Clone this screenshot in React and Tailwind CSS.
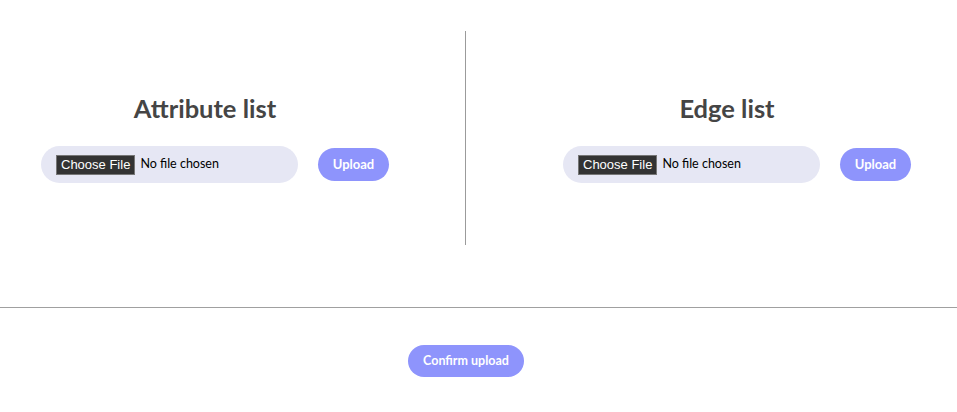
import React from 'react';

function FilePicker() {
  return (
    <div className="flex items-center w-[257px] h-[37px] rounded-full bg-[#e6e7f4] pl-[15px]">
      <span className="h-[20px] px-[4px] flex items-center bg-[#333333] border border-[#767676] text-white text-[13px] font-['Liberation_Sans',Arial,sans-serif]">
        Choose File
      </span>
      <span className="ml-[5px] text-[12.5px] text-black font-['Lato',sans-serif]">No file chosen</span>
    </div>
  );
}

function Column({ title }) {
  return (
    <div className="w-[410px] flex flex-col items-center pt-[61px]">
      <h2 className="h-[32px] leading-[32px] text-[25.5px] font-bold text-[#454545] font-['Lato',sans-serif]">{title}</h2>
      <div className="flex items-center gap-[20px] pl-[20px] mt-[22px]">
        <FilePicker />
        <button className="w-[71px] h-[33px] rounded-full bg-[#8e94fc] text-white text-[13px] font-bold font-['Lato',sans-serif]">
          Upload
        </button>
      </div>
    </div>
  );
}

export default function App() {
  return (
    <div className="w-[957px] h-[412px] bg-white">
      <div className="flex pt-[31px]">
        <Column title="Attribute list" />
        <div className="ml-[55px] mr-[56px] w-px h-[214px] bg-[#9b9b9b]" />
        <Column title="Edge list" />
      </div>
      <div className="mt-[62px] h-px bg-[#a0a0a0]" />
      <div className="w-[932px] flex justify-center pt-[37px]">
        <button className="w-[116px] h-[32px] rounded-full bg-[#8e94fc] text-white text-[12.5px] font-bold font-['Lato',sans-serif]">
          Confirm upload
        </button>
      </div>
    </div>
  );
}
